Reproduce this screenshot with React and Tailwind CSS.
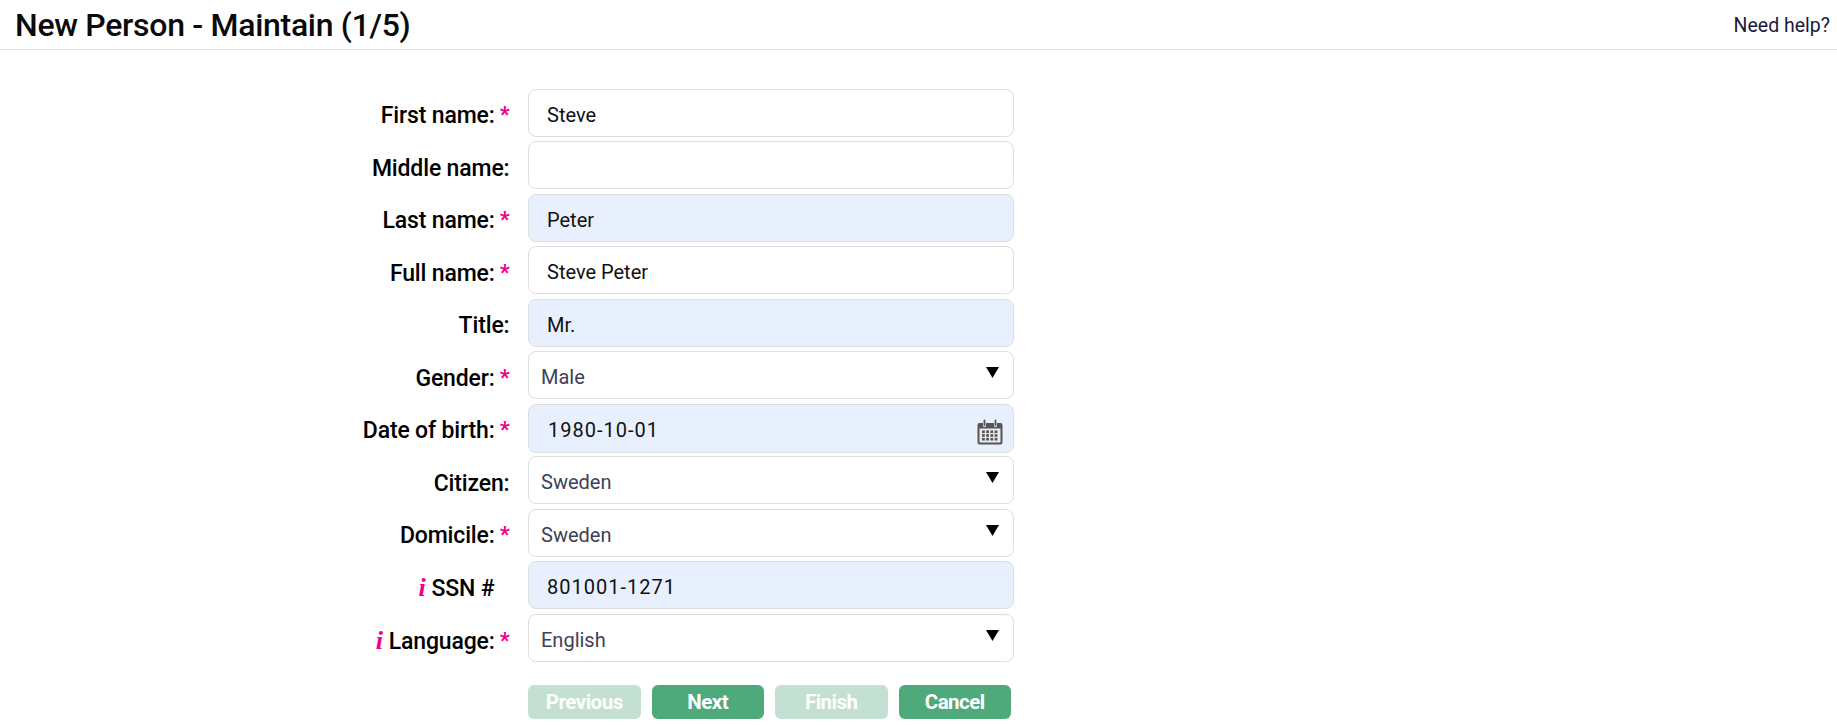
function Label({ info, req, text, pr }) {
  return (
    <label className={`w-[509.5px] mr-[0.5px] shrink-0 pt-[7px] text-right text-[23px] font-medium leading-[28px] text-black tracking-[-0.15px] ${pr || ""}`}>
      {info && <i className="font-['Liberation_Serif',serif] font-bold text-[#ec008c] mr-[6px] text-[26px]">i</i>}
      {text}
      {req && <span className="text-[#ec008c] font-bold ml-[5px] text-[22px] relative -top-[1px]">*</span>}
    </label>
  );
}

function Text({ label, value, filled, req, info, spaced }) {
  return (
    <div className="flex items-center gap-[18px] h-[48px]">
      <Label text={label} req={req} info={info} pr={info && !req ? "pr-[15px]" : ""} />
      <input
        readOnly
        value={value}
        className={`w-[486px] h-full rounded-[8px] border border-[#dedede] pl-[18px] pt-[4px] pr-3 text-[20px] text-[#111] outline-none ${filled ? "bg-[#e8f0fe]" : "bg-white"} ${spaced ? "tracking-[1px]" : ""}`}
      />
    </div>
  );
}

function Sel({ label, value, req, info }) {
  return (
    <div className="flex items-center gap-[18px] h-[48px]">
      <Label text={label} req={req} info={info} />
      <div className="relative w-[486px] h-full">
        <select
          value={value}
          onChange={() => {}}
          className="appearance-none w-full h-full rounded-[8px] border border-[#dedede] bg-white pl-[12px] pt-[4px] text-[20px] text-[#3c4158] outline-none"
        >
          <option>{value}</option>
        </select>
        <svg className="absolute left-[458px] top-[16px] pointer-events-none" width="13" height="11" viewBox="0 0 13 11">
          <path d="M0 0H13L6.5 11Z" fill="#000" />
        </svg>
      </div>
    </div>
  );
}

function Calendar() {
  return (
    <svg className="absolute left-[449px] top-[15.5px] pointer-events-none" width="26" height="26" viewBox="0 0 26 26">
      <path d="M2.5 4H6V6.5A1.5 1.5 0 0 0 9 6.5V4H17V6.5A1.5 1.5 0 0 0 20 6.5V4H23.5A2 2 0 0 1 25.5 6V23.5A2 2 0 0 1 23.5 25.5H2.5A2 2 0 0 1 .5 23.5V6A2 2 0 0 1 2.5 4Z" fill="#555" />
      <rect x="6.6" y=".5" width="1.8" height="6.5" rx=".9" fill="#555" />
      <rect x="17.6" y=".5" width="1.8" height="6.5" rx=".9" fill="#555" />
      <rect x="2.5" y="9.5" width="21" height="14" fill="#e8eaee" />
      <g fill="#555">
        {[5, 9.2, 13.4, 17.6].map((x) =>
          [11.5, 15.2, 18.9].map((y) => <rect key={x + "-" + y} x={x} y={y} width="2.8" height="2.6" />)
        )}
      </g>
    </svg>
  );
}

function Btn({ children, off }) {
  return (
    <button
      type="button"
      className={`w-[112.5px] h-[34px] rounded-[6px] text-white font-bold text-[20.5px] tracking-[-0.5px] leading-none ${off ? "bg-[#c3e0d2]" : "bg-[#4ea97b]"}`}
    >
      {children}
    </button>
  );
}

export default function App() {
  return (
    <div className="min-h-[725px] bg-white font-['Roboto',sans-serif]">
      <header className="h-[50px] border-b border-[#dedede] flex items-center justify-between pl-[15px] pr-[7px]">
        <h1 className="text-[32px] font-medium text-[#0a0a0a] leading-none tracking-[-0.3px]">New Person - Maintain (1/5)</h1>
        <a className="pt-[3px] text-[19.5px] text-[#1a1a3a] leading-none">Need help?</a>
      </header>
      <main className="pt-[38.8px] flex flex-col gap-[4.5px]">
        <Text label="First name:" value="Steve" req />
        <Text label="Middle name:" value="" />
        <Text label="Last name:" value="Peter" filled req />
        <Text label="Full name:" value="Steve Peter" req />
        <Text label="Title:" value="Mr." filled />
        <Sel label="Gender:" value="Male" req />
        <div className="flex items-start gap-[18px] h-[48px]">
          <Label text="Date of birth:" req pr="self-center" />
          <div className="relative w-[486px] h-[49px]">
            <input
              readOnly
              value="1980-10-01"
              className="w-full h-full rounded-[8px] border border-[#dedede] bg-[#e8f0fe] pl-[19px] pt-[4px] text-[20px] tracking-[1px] text-[#111] outline-none"
            />
            <Calendar />
          </div>
        </div>
        <Sel label="Citizen:" value="Sweden" />
        <Sel label="Domicile:" value="Sweden" req />
        <Text label="SSN #" value="801001-1271" filled info spaced />
        <Sel label="Language:" value="English" req info />
        <div className="flex gap-[11px] pl-[528px] pt-[18.7px]">
          <Btn off>Previous</Btn>
          <Btn>Next</Btn>
          <Btn off>Finish</Btn>
          <Btn>Cancel</Btn>
        </div>
      </main>
    </div>
  );
}
